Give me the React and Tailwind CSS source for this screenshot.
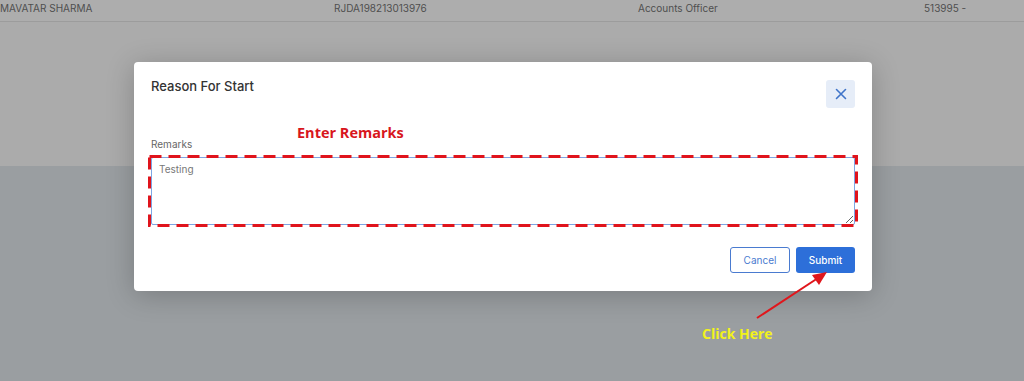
import React from "react";

const font = { fontFamily: "Inter, 'Noto Sans', sans-serif" };

const TopRow = () => (
  <div className="h-[22px] flex items-start pt-[1px] text-[10px] text-[#4f4f4f] border-b border-[#9c9c9c] bg-[#adadad]">
    <div className="w-[334px] uppercase">Mavatar Sharma</div>
    <div className="w-[304px]">RJDA198213013976</div>
    <div className="w-[286px]">Accounts Officer</div>
    <div>513995 -</div>
  </div>
);

const CloseIcon = () => (
  <svg width="12" height="12" viewBox="0 0 12 12" fill="none">
    <path d="M1.5 1.5L10.5 10.5M10.5 1.5L1.5 10.5" stroke="#3f74c9" strokeWidth="1.6" strokeLinecap="round" />
  </svg>
);

const Modal = () => (
  <div className="w-[738px] bg-white rounded-[4px] shadow-[0_4px_28px_rgba(0,0,0,0.22)] px-[17px] pt-[16px] pb-[18px]">
    <div className="flex items-start justify-between">
      <h2 className="text-[13px] leading-[16px] font-medium text-[#333]">Reason For Start</h2>
      <button className="mt-[2px] w-[29px] h-[28px] rounded-[3px] bg-[#e6edf8] flex items-center justify-center">
        <CloseIcon />
      </button>
    </div>
    <div className="relative mt-[30px]">
      <span
        className="absolute left-[146px] top-[-16px] text-[14.5px] font-bold text-[#d8161d]"
        style={{ fontFamily: "'Open Sans', sans-serif" }}
      >
        Enter Remarks
      </span>
      <label className="block text-[10px] text-[#666] leading-[12px]">Remarks</label>
      <div className="relative mt-[7px]">
        <textarea
          readOnly
          defaultValue="Testing"
          className="block w-full h-[68px] border border-[#7ea5e3] rounded-[2px] px-[7px] py-[4px] text-[10px] text-[#777] outline-none"
          style={font}
        />
        <svg className="absolute left-[-3px] top-[-2px] w-[710px] h-[72px] pointer-events-none" viewBox="0 0 710 72" fill="none">
          <rect x="1.5" y="1.5" width="707" height="69" stroke="#e0141c" strokeWidth="3" strokeDasharray="12 7" />
        </svg>
      </div>
    </div>
    <div className="flex justify-end gap-[6px] mt-[22px]">
      <button className="w-[60px] h-[26px] rounded-[3px] border border-[#4a7bd0] text-[10px] text-[#4a7bd0] bg-white">
        Cancel
      </button>
      <button className="w-[59px] h-[26px] rounded-[3px] bg-[#2d6fd9] text-[10px] font-medium text-white">
        Submit
      </button>
    </div>
  </div>
);

const Arrow = () => (
  <svg className="absolute left-0 top-0 w-[1024px] h-[381px] pointer-events-none" viewBox="0 0 1024 381">
    <line x1="757" y1="318" x2="818" y2="278" stroke="#e0161c" strokeWidth="2" />
    <polygon points="827,272 812,275 819,285" fill="#e0161c" />
  </svg>
);

export default function App() {
  return (
    <div className="relative w-[1024px] h-[381px] overflow-hidden flex flex-col" style={font}>
      <TopRow />
      <div className="h-[144px] bg-[#ababab]" />
      <div className="flex-1 bg-[#9a9ea1]" />
      <div className="absolute inset-0 pl-[134px] pt-[62px]">
        <Modal />
      </div>
      <Arrow />
      <span
        className="absolute left-[702px] top-[323px] text-[14px] font-bold text-[#f2f21c]"
        style={{ fontFamily: "'Open Sans', sans-serif" }}
      >
        Click Here
      </span>
    </div>
  );
}
